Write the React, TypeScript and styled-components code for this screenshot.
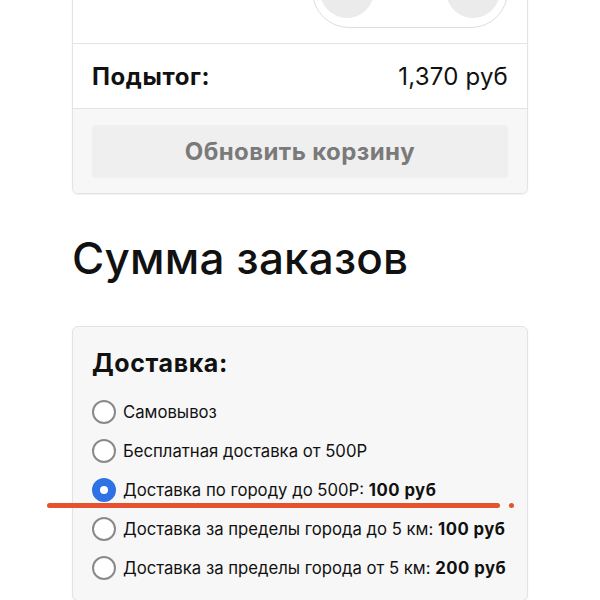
import React from 'react';
import styled, { createGlobalStyle } from 'styled-components';

const GlobalStyle = createGlobalStyle`
  html, body {
    margin: 0;
    padding: 0;
    background: #ffffff;
    font-family: Inter, "Noto Sans", sans-serif;
    color: #111;
    overflow: hidden;
  }
`;

const Page = styled.div`
  position: relative;
  width: 600px;
  height: 600px;
  overflow: hidden;
  padding: 0 72px;
  box-sizing: border-box;
`;

const Card = styled.div<{ $muted?: boolean }>`
  border: 1px solid #e3e3e3;
  border-radius: 6px;
  background: ${(p) => (p.$muted ? '#f7f7f7' : '#ffffff')};
  box-shadow: 0 1px 2px rgba(0, 0, 0, 0.06);
  overflow: hidden;
`;

const CartCard = styled(Card)`
  margin-top: -60px;
  border-top-left-radius: 0;
  border-top-right-radius: 0;
`;

const QtyRow = styled.div`
  height: 103px;
  display: flex;
  justify-content: flex-end;
  align-items: flex-end;
  padding: 0 19px 15px;
  box-sizing: border-box;
  border-bottom: 1px solid #e3e3e3;
`;

const QtyPill = styled.div`
  width: 196px;
  height: 74px;
  box-sizing: border-box;
  border: 1.5px solid #dedede;
  border-radius: 37px;
  display: flex;
  align-items: center;
  justify-content: space-between;
  padding: 0 7px;
`;

const QtyButton = styled.div`
  width: 54px;
  height: 54px;
  border-radius: 50%;
  background: #ebebeb;
`;

const QtyValue = styled.span`
  font-size: 22px;
  position: relative;
  top: -11px;
`;

const SubtotalRow = styled.div`
  height: 64px;
  display: flex;
  align-items: center;
  justify-content: space-between;
  padding: 0 19px;
  border-bottom: 1px solid #e3e3e3;
  font-size: 24px;
`;

const SubtotalLabel = styled.span`
  font-weight: 700;
  letter-spacing: 0.6px;
`;

const SubtotalValue = styled.span`
  font-weight: 400;
  letter-spacing: 0.2px;
`;

const CardFooter = styled.div`
  background: #f7f7f7;
  padding: 16px 19px 15px;
`;

const UpdateButton = styled.button`
  width: 100%;
  height: 53px;
  border: none;
  border-radius: 4px;
  background: #efefef;
  color: #7a7a7a;
  font-family: Inter, "Noto Sans", sans-serif;
  font-size: 24px;
  font-weight: 700;
  letter-spacing: 0.4px;
`;

const Heading = styled.h2`
  margin: 31px 0 35px;
  font-size: 44px;
  font-weight: 500;
  line-height: 66px;
  letter-spacing: 0.2px;
`;

const DeliveryCard = styled(Card)`
  padding: 21px 19px 20px;
`;

const DeliveryTitle = styled.div`
  font-size: 25px;
  font-weight: 700;
  letter-spacing: 0.6px;
  line-height: 30px;
  margin-bottom: 22px;
`;

const OptionList = styled.div`
  display: flex;
  flex-direction: column;
  gap: 15px;
`;

const Option = styled.label`
  display: flex;
  align-items: center;
  gap: 7px;
  height: 24px;
  font-size: 16.7px;
  white-space: nowrap;
`;

const Radio = styled.span<{ $checked?: boolean }>`
  flex: none;
  width: 24px;
  height: 24px;
  box-sizing: border-box;
  border-radius: 50%;
  border: ${(p) => (p.$checked ? '8px solid #2f72e6' : '2px solid #8a8a8a')};
  background: #fff;
`;

const Price = styled.b`
  font-weight: 700;
  letter-spacing: 0.5px;
`;

const MarkLine = styled.div`
  position: absolute;
  left: 47px;
  top: 503px;
  width: 453px;
  height: 5px;
  border-radius: 3px;
  background: #e4532e;
`;

const MarkDot = styled.div`
  position: absolute;
  left: 509px;
  top: 503px;
  width: 5px;
  height: 5px;
  border-radius: 50%;
  background: #e4532e;
`;

const options = [
  { label: 'Самовывоз' },
  { label: 'Бесплатная доставка от 500Р' },
  { label: 'Доставка по городу до 500Р:', price: '100 руб', checked: true },
  { label: 'Доставка за пределы города до 5 км:', price: '100 руб' },
  { label: 'Доставка за пределы города от 5 км:', price: '200 руб' },
];

export default function App() {
  return (
    <Page>
      <GlobalStyle />
      <CartCard>
        <QtyRow>
          <QtyPill>
            <QtyButton />
            <QtyValue>1</QtyValue>
            <QtyButton />
          </QtyPill>
        </QtyRow>
        <SubtotalRow>
          <SubtotalLabel>Подытог:</SubtotalLabel>
          <SubtotalValue>1,370 руб</SubtotalValue>
        </SubtotalRow>
        <CardFooter>
          <UpdateButton>Обновить корзину</UpdateButton>
        </CardFooter>
      </CartCard>

      <Heading>Сумма заказов</Heading>

      <DeliveryCard $muted>
        <DeliveryTitle>Доставка:</DeliveryTitle>
        <OptionList>
          {options.map((o) => (
            <Option key={o.label}>
              <Radio $checked={o.checked} />
              <span>
                {o.label}
                {o.price && <> <Price>{o.price}</Price></>}
              </span>
            </Option>
          ))}
        </OptionList>
      </DeliveryCard>

      <MarkLine />
      <MarkDot />
    </Page>
  );
}
